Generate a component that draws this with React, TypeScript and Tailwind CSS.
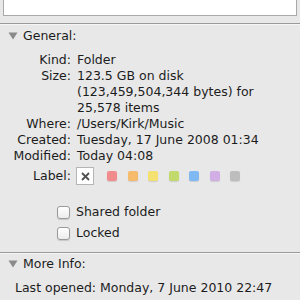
import React from "react";

const font = { fontFamily: '"DejaVu Sans", "Liberation Sans", sans-serif' };

function Tri() {
  return (
    <svg width="10" height="8" viewBox="0 0 10 8" className="shrink-0">
      <path d="M0.5 0.5 L9.5 0.5 L5 7.5 Z" fill="#8a8a8a" />
    </svg>
  );
}

function Row({ label, children }: { label: string; children: React.ReactNode }) {
  return (
    <div className="flex">
      <div className="w-[72px] text-right pr-[1px]">{label}</div>
      <div className="pl-[5px]">{children}</div>
    </div>
  );
}

function Check({ label }: { label: string }) {
  return (
    <div className="flex items-center h-[21px] pl-[57px]">
      <div className="w-[13px] h-[13px] rounded-[3px] border border-[#9a9a9a] bg-gradient-to-b from-white to-[#ececec] shadow-[0_1px_1px_rgba(0,0,0,0.15)]" />
      <span className="ml-[6px]">{label}</span>
    </div>
  );
}

const swatches = ["#f28c8c", "#f6bb6c", "#f4e172", "#c2d96c", "#80b8f4", "#d1aee6", "#bdbdbd"];

export default function App() {
  return (
    <div className="w-[300px] h-[300px] bg-[#e8e8e8] text-[#1c1c1c] text-[12.5px] overflow-hidden" style={font}>
      <div className="h-[16px] mx-[3px] bg-white border-x border-b border-[#a9a9a9]" />
      <div className="mt-[7px] border-t border-[#9a9a9a]" />
      <div className="border-t border-[#f6f6f6]" />
      <div className="flex items-center h-[16px] mt-[3px] pl-[8px]">
        <Tri />
        <span className="ml-[5px]">General:</span>
      </div>
      <div className="mt-[8px] flex flex-col leading-[16px]">
        <Row label="Kind:">Folder</Row>
        <Row label="Size:">
          <div>123.5 GB on disk</div>
          <div>(123,459,504,344 bytes) for</div>
          <div>25,578 items</div>
        </Row>
        <Row label="Where:">/Users/Kirk/Music</Row>
        <Row label="Created:">Tuesday, 17 June 2008 01:34</Row>
        <Row label="Modified:">Today 04:08</Row>
        <div className="flex items-center h-[18px] mt-[3px]">
          <div className="w-[72px] text-right pr-[1px]">Label:</div>
          <div className="pl-[4px] flex items-center">
            <div className="w-[18px] h-[18px] bg-white border border-[#b5b5b5] flex items-center justify-center">
              <svg width="9" height="9" viewBox="0 0 9 9">
                <path d="M1 1 L8 8 M8 1 L1 8" stroke="#505050" strokeWidth="1.8" />
              </svg>
            </div>
            <div className="flex ml-[13px] gap-[10.5px]">
              {swatches.map((c) => (
                <div key={c} className="w-[10px] h-[10px] rounded-[2px]" style={{ background: c, boxShadow: "0 1px 1px rgba(0,0,0,0.12)" }} />
              ))}
            </div>
          </div>
        </div>
      </div>
      <div className="mt-[17px]">
        <Check label="Shared folder" />
        <Check label="Locked" />
      </div>
      <div className="mt-[8px] border-t border-[#9a9a9a]" />
      <div className="border-t border-[#f6f6f6]" />
      <div className="flex items-center h-[16px] mt-[2px] pl-[8px]">
        <Tri />
        <span className="ml-[5px]">More Info:</span>
      </div>
      <div className="mt-[8px] pl-[15px] leading-[16px]">Last opened: Monday, 7 June 2010 22:47</div>
    </div>
  );
}
